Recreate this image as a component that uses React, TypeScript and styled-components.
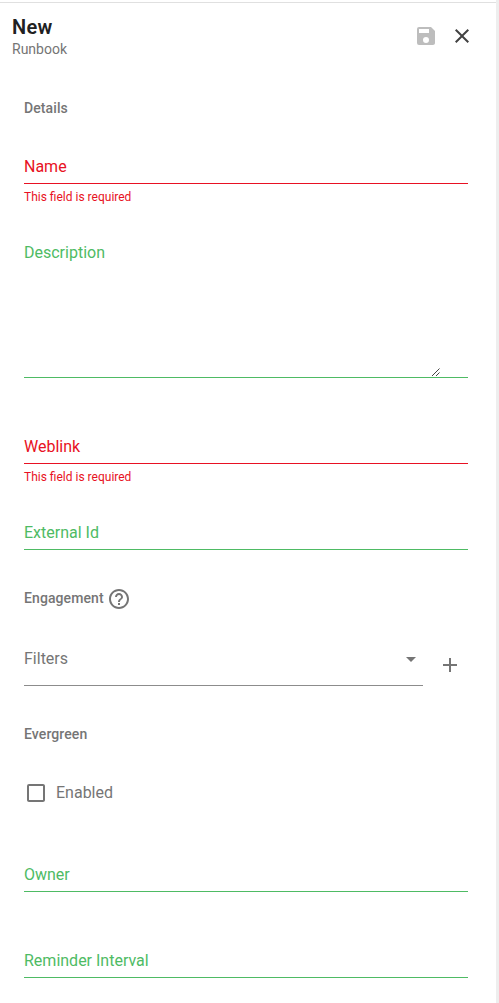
import React from "react";
import styled, { createGlobalStyle } from "styled-components";

const GlobalStyle = createGlobalStyle`
  * { box-sizing: border-box; }
  body {
    margin: 0;
    background: #fff;
    font-family: Roboto, "Liberation Sans", sans-serif;
    overflow: hidden;
  }
`;

const RED = "#e81123";
const GREEN = "#4ebb64";
const GREY = "#757575";

const Panel = styled.main`
  width: 499px;
  height: 1003px;
  display: flex;
  background: #fff;
  overflow: hidden;
`;

const Gutter = styled.div`
  width: 3px;
  background: #eeeeee;
`;

const Content = styled.div`
  flex: 1;
  margin-top: 2px;
  border-top: 1px solid #e0e0e0;
`;

const Header = styled.header`
  display: flex;
  justify-content: space-between;
  height: 83px;
  padding: 12px 22px 0 12px;
`;

const Title = styled.h1`
  margin: 0;
  font-size: 20px;
  line-height: 24px;
  font-weight: 600;
  letter-spacing: 0.25px;
  color: #212121;
`;

const Subtitle = styled.div`
  font-size: 14px;
  line-height: 20px;
  color: ${GREY};
`;

const Actions = styled.div`
  display: flex;
  gap: 12px;
  padding-top: 9px;
`;

const IconButton = styled.button<{ $color?: string }>`
  display: flex;
  align-items: center;
  justify-content: center;
  width: 24px;
  height: 24px;
  padding: 0;
  border: 0;
  background: none;
  color: ${(p) => p.$color || GREY};
`;

const Icon = styled.svg`
  display: block;
  fill: currentColor;
`;

const Form = styled.form`
  padding: 0 28px 0 24px;
`;

const SectionTitle = styled.h2<{ $space: number }>`
  display: flex;
  align-items: center;
  gap: 3px;
  height: 44px;
  margin: ${(p) => p.$space}px 0 0;
  font-size: 14px;
  line-height: 20px;
  font-weight: 500;
  letter-spacing: 0.1px;
  color: ${GREY};
`;

const Field = styled.div<{ $space: number; $color: string; $tall?: boolean }>`
  display: flex;
  justify-content: space-between;
  align-items: ${(p) => (p.$tall ? "flex-end" : "flex-start")};
  height: ${(p) => (p.$tall ? 137 : 29)}px;
  margin-top: ${(p) => p.$space}px;
  border-bottom: 1px solid ${(p) => p.$color};
  color: ${(p) => p.$color};
`;

const Label = styled.label`
  align-self: flex-start;
  font-size: 16px;
  line-height: 24px;
`;

const ErrorText = styled.div`
  height: 16px;
  margin-top: 5px;
  font-size: 12px;
  line-height: 16px;
  color: ${RED};
`;

const ResizeGrip = styled(Icon)`
  margin: 0 27px 0 0;
`;

const HelpIcon = styled(Icon)`
  margin-top: 2px;
`;

const FilterRow = styled.div`
  display: flex;
  justify-content: space-between;
  height: 39px;
  margin-top: 27px;
  padding-right: 6px;
`;

const Select = styled.div`
  display: flex;
  justify-content: space-between;
  width: 399px;
  border-bottom: 1px solid #8c8c8c;
  color: ${GREY};
`;

const Caret = styled(Icon)`
  margin: 10px 7px 0 0;
`;

const AddButton = styled(IconButton)`
  margin-top: 6px;
`;

const CheckRow = styled.label`
  display: flex;
  align-items: center;
  gap: 8px;
  height: 24px;
  margin-top: 25px;
  font-size: 16px;
  line-height: 24px;
  color: ${GREY};
`;

export default function App() {
  return (
    <>
      <GlobalStyle />
      <Panel>
        <Content>
          <Header>
            <div>
              <Title>New</Title>
              <Subtitle>Runbook</Subtitle>
            </div>
            <Actions>
              <IconButton $color="#bdbdbd" aria-label="Save" disabled>
                <Icon width="24" height="24" viewBox="0 0 24 24">
                  <path d="M17 3H5a2 2 0 0 0-2 2v14a2 2 0 0 0 2 2h14c1.100 0 2-.9 2-2V7l-4-4zm-5 16a3 3 0 1 1 0-6 3 3 0 0 1 0 6zm3-10H5V5h10v4z" />
                </Icon>
              </IconButton>
              <IconButton $color="#424242" aria-label="Close">
                <Icon width="24" height="24" viewBox="0 0 24 24">
                  <path d="M19 6.410 17.590 5 12 10.590 6.410 5 5 6.410 10.590 12 5 17.590 6.410 19 12 13.410 17.590 19 19 17.590 13.410 12z" />
                </Icon>
              </IconButton>
            </Actions>
          </Header>
          <Form>
            <SectionTitle $space={0}>Details</SectionTitle>
            <Field $space={25} $color={RED}>
              <Label>Name</Label>
            </Field>
            <ErrorText>This field is required</ErrorText>
            <Field $space={36} $color={GREEN} $tall>
              <Label>Description</Label>
              <ResizeGrip width="10" height="9" viewBox="0 0 10 9">
                <path d="M1 8 8.500 .5M5 8 8.500 4.500" fill="none" stroke="#444" />
              </ResizeGrip>
            </Field>
            <Field $space={57} $color={RED}>
              <Label>Weblink</Label>
            </Field>
            <ErrorText>This field is required</ErrorText>
            <Field $space={36} $color={GREEN}>
              <Label>External Id</Label>
            </Field>
            <SectionTitle $space={26}>
              Engagement
              <HelpIcon width="24" height="24" viewBox="0 0 24 24">
                <path d="M11 18h2v-2h-2v2zm1-16C6.480 2 2 6.480 2 12s4.480 10 10 10 10-4.480 10-10S17.520 2 12 2zm0 18c-4.410 0-8-3.590-8-8s3.590-8 8-8 8 3.590 8 8-3.590 8-8 8zm0-14c-2.210 0-4 1.790-4 4h2c0-1.100.9-2 2-2s2 .9 2 2c0 2-3 1.750-3 5h2c0-2.250 3-2.500 3-5 0-2.210-1.790-4-4-4z" />
              </HelpIcon>
            </SectionTitle>
            <FilterRow>
              <Select>
                <Label>Filters</Label>
                <Caret width="10" height="5" viewBox="0 0 10 5">
                  <path d="M0 0h10L5 5z" />
                </Caret>
              </Select>
              <AddButton type="button" aria-label="Add filter">
                <Icon width="24" height="24" viewBox="0 0 24 24">
                  <path d="M19 13h-6v6h-2v-6H5v-2h6V5h2v6h6v2z" />
                </Icon>
              </AddButton>
            </FilterRow>
            <SectionTitle $space={26}>Evergreen</SectionTitle>
            <CheckRow>
              <Icon width="24" height="24" viewBox="0 0 24 24">
                <path d="M19 5v14H5V5h14m0-2H5a2 2 0 0 0-2 2v14c0 1.100.9 2 2 2h14c1.100 0 2-.9 2-2V5c0-1.100-.9-2-2-2z" />
              </Icon>
              Enabled
            </CheckRow>
            <Field $space={58} $color={GREEN}>
              <Label>Owner</Label>
            </Field>
            <Field $space={57} $color={GREEN}>
              <Label>Reminder Interval</Label>
            </Field>
          </Form>
        </Content>
        <Gutter />
      </Panel>
    </>
  );
}
